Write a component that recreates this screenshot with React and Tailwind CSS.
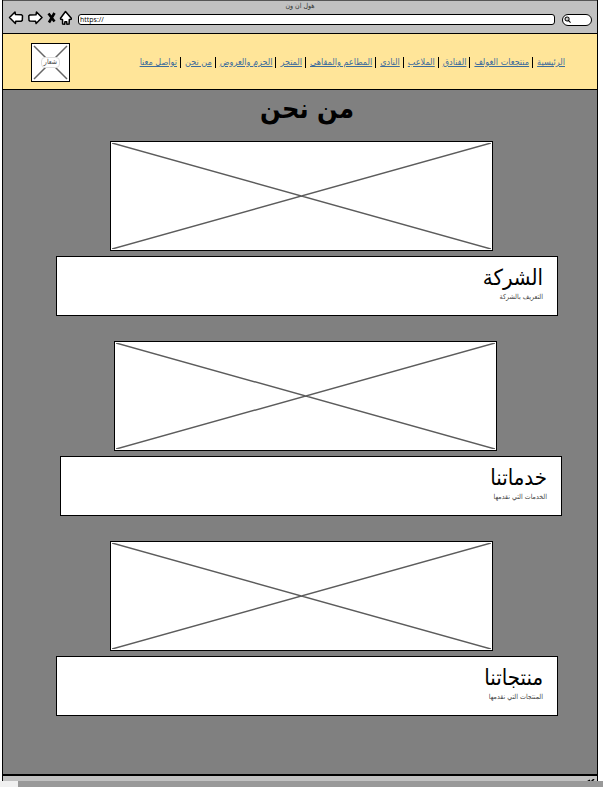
import React from "react";

const links = [
  "الرئيسية",
  "منتجعات الغولف",
  "الفنادق",
  "الملاعب",
  "النادي",
  "المطاعم والمقاهي",
  "المتجر",
  "الحزم والعروض",
  "من نحن",
  "تواصل معنا",
];

const sections = [
  { title: "الشركة", text: "التعريف بالشركة", inset: "pl-[53px] pr-[39px]" },
  { title: "خدماتنا", text: "الخدمات التي نقدمها", inset: "pl-[57px] pr-[35px]" },
  { title: "منتجاتنا", text: "المنتجات التي نقدمها", inset: "pl-[53px] pr-[39px]" },
];

function ToolButton({ label, children }) {
  return (
    <button type="button" aria-label={label} className="block h-4 w-4 shrink-0">
      <svg viewBox="0 0 16 16" className="h-4 w-4" fill="#fff" stroke="#000" strokeWidth="1.5" strokeLinejoin="round">
        {children}
      </svg>
    </button>
  );
}

function Toolbar() {
  return (
    <header className="h-[33px] border-t border-[#555] bg-[#c1c1c1]">
      <p className="h-2 text-center text-[7px] leading-[11px] text-[#333]" dir="rtl">هول ان ون</p>
      <div className="flex h-[18px] items-center pr-[5px] pl-[5px]" dir="ltr">
        <ToolButton label="رجوع">
          <path d="M1.500 7.500 7 2l.5 2.600 6 .2 1 .9-.2 4.700-1 .8-5.600.1-.3 2.200Z" />
        </ToolButton>
        <div className="ml-[3px]">
          <ToolButton label="تقدم">
            <path d="m15 7.500-5.500-5.500-.5 2.800-6 .1-1.200.9.200 4.500 1 .8 5.600.1.500 2.300Z" />
          </ToolButton>
        </div>
        <ToolButton label="إيقاف">
          <path d="m5.500 3.500 6 8M11.500 3 6 12.500" strokeWidth="2.600" />
        </ToolButton>
        <div className="-ml-px">
          <ToolButton label="الصفحة الرئيسية">
            <path d="M7.500 1.500 2.500 8.200l.3 1.100 1.700.1.100 4.600 2.100.2.200-2.400 1.800-.1.200 2.500 2.200-.1.200-4.500 1.800-.3.200-1Z" />
          </ToolButton>
        </div>
        <input
          type="text"
          aria-label="العنوان"
          defaultValue="https://"
          className="mt-[3px] ml-1 h-[11px] min-w-0 flex-1 rounded-[3px] border border-black bg-white px-px pb-px font-['Open_Sans',sans-serif] text-[7px] leading-[8px] text-black outline-none"
        />
        <label className="mt-[3px] ml-[7px] flex h-3 w-[30px] shrink-0 items-center rounded-full border border-black bg-white pl-px">
          <svg viewBox="0 0 8 8" className="h-[7px] w-[7px] shrink-0" fill="none" stroke="#000" strokeWidth="1.2">
            <circle cx="3.500" cy="3.500" r="2.300" />
            <path d="m5 5 2.500 2.500M3 3.500h1" />
          </svg>
          <input type="text" aria-label="بحث" className="h-2 w-full min-w-0 bg-transparent text-[7px] outline-none" />
        </label>
      </div>
    </header>
  );
}

function Navigation() {
  return (
    <nav className="flex h-[57px] items-center justify-between border-y border-black bg-[#ffe599] pr-8 pl-7" dir="ltr">
      <div className="relative mt-px h-[39px] w-[39px] shrink-0 border border-black bg-white p-px">
        <svg viewBox="0 0 35 35" className="h-full w-full" stroke="#666" strokeWidth="1.500">
          <path d="m1 1 33 33M34 1 1 34" />
        </svg>
        <div className="absolute inset-0 flex items-center justify-center">
          <span className="rounded-[4px] border border-[#ddd] bg-white px-[2px] text-[7px] leading-[9px] text-[#444]">شعار</span>
        </div>
      </div>
      <ul className="flex items-center pt-px text-[9px] leading-3 whitespace-nowrap" dir="rtl">
        {links.map((link, i) => (
          <li key={link} className="flex items-center">
            {i > 0 && <span className="ms-1 me-[3px] h-[11px] w-px bg-black" />}
            <a href="#" className="text-[#3d6c9c] underline">{link}</a>
          </li>
        ))}
      </ul>
    </nav>
  );
}

function Section({ title, text, inset }) {
  return (
    <section className={`mb-[25px] ${inset}`}>
      <div className="mr-[65px] ml-[54px] h-[110px] border border-black bg-white p-px">
        <svg viewBox="0 0 380 106" preserveAspectRatio="none" className="h-full w-full" stroke="#5c5c5c" strokeWidth="1.500" role="img" aria-label={title}>
          <path d="m0 0 380 106M380 0 0 106" />
        </svg>
      </div>
      <div className="mt-[5px] h-[60px] border border-black bg-white px-[14px] pt-[6px]" dir="rtl">
        <h2 className="text-[22px] leading-[30px] text-black">{title}</h2>
        <p className="text-[7px] leading-[9px] text-[#444]">{text}</p>
      </div>
    </section>
  );
}

export default function App() {
  return (
    <div className="min-h-screen bg-white font-['DejaVu_Sans_Condensed','DejaVu_Sans',sans-serif]">
      <div className="mr-[5px] ml-[2px] border-x border-black bg-[#808080]">
        <Toolbar />
        <Navigation />
        <main className="pb-[33px]">
          <h1 className="h-[51px] pl-[14px] text-center text-[27px] leading-[38px] font-bold text-black" dir="rtl">من نحن</h1>
          {sections.map((section) => (
            <Section key={section.title} {...section} />
          ))}
        </main>
        <footer className="flex h-[7px] justify-end overflow-hidden border-t-2 border-black bg-[#c1c1c1] pr-[2px]" dir="ltr">
          <svg viewBox="0 0 8 8" className="mt-[3px] h-2 w-2" stroke="#000" strokeWidth="1.5">
            <path d="M0 3 3 1M3 4l4-4" />
          </svg>
        </footer>
      </div>
      <div className="h-[6px] bg-[#999]">
        <div className="h-full w-[18px] bg-[#f0f0f0]" />
      </div>
    </div>
  );
}
